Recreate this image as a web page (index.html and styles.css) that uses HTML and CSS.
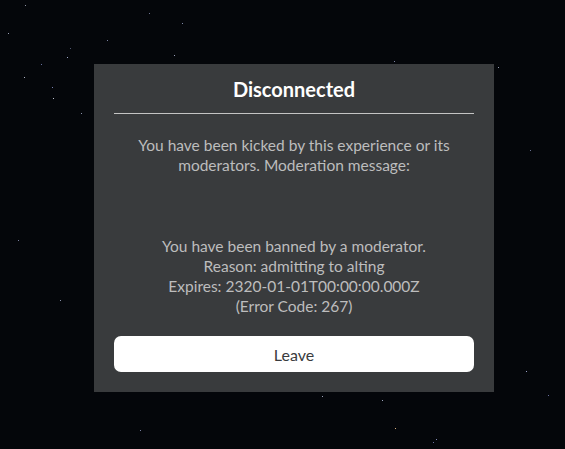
FILE: index.html
```html
<!DOCTYPE html>
<html lang="en">
<head>
    <meta charset="UTF-8">
    <meta name="viewport" content="width=device-width, initial-scale=1">
    <title>Disconnected</title>
    <link rel="stylesheet" href="styles.css">
</head>
<body>
    <!-- Starfield behind the prompt -->
    <svg class="stars" width="565" height="449" viewBox="0 0 565 449">
        <rect x="25" y="5" width="1" height="1" fill="#8a8fa0"/>
        <rect x="8" y="33" width="1" height="1" fill="#9aa0b5"/>
        <rect x="149" y="13" width="1" height="1" fill="#6d7390"/>
        <rect x="107" y="40" width="1" height="1" fill="#7a80a0"/>
        <rect x="182" y="23" width="1" height="1" fill="#8088a8"/>
        <rect x="174" y="55" width="1" height="1" fill="#9aa0b8"/>
        <rect x="67" y="57" width="1" height="1" fill="#a0a8c8"/>
        <rect x="41" y="64" width="1" height="1" fill="#6670a0"/>
        <rect x="24" y="77" width="1" height="1" fill="#b0b4c4"/>
        <rect x="52" y="87" width="1" height="1" fill="#7880b0"/>
        <rect x="53" y="98" width="1" height="1" fill="#c0c4d0"/>
        <rect x="81" y="113" width="1" height="1" fill="#8a90a8"/>
        <rect x="70" y="48" width="1" height="1" fill="#505670"/>
        <rect x="394" y="61" width="1" height="1" fill="#7a80a0"/>
        <rect x="498" y="67" width="1" height="1" fill="#9aa0b8"/>
        <rect x="530" y="150" width="1" height="1" fill="#6a7090"/>
        <rect x="18" y="240" width="1" height="1" fill="#7a80a0"/>
        <rect x="60" y="300" width="1" height="1" fill="#8a90a8"/>
        <rect x="526" y="371" width="1" height="1" fill="#9aa0c8"/>
        <rect x="548" y="395" width="1" height="1" fill="#6a70a0"/>
        <rect x="382" y="400" width="1" height="1" fill="#a0a8c0"/>
        <rect x="395" y="428" width="1" height="1" fill="#d8b080"/>
        <rect x="436" y="439" width="1" height="1" fill="#8088b0"/>
        <rect x="433" y="442" width="1" height="1" fill="#6a70a0"/>
        <rect x="322" y="396" width="1" height="1" fill="#9aa0b8"/>
        <rect x="140" y="430" width="1" height="1" fill="#7a80a0"/>
    </svg>

    <div class="prompt">
        <div class="prompt-title">Disconnected</div>
        <div class="prompt-body">
            <p>You have been kicked by this experience or its<br>moderators. Moderation message:</p>
            <p class="message">You have been banned by a moderator.<br>Reason: admitting to alting<br>Expires: 2320-01-01T00:00:00.000Z<br>(Error Code: 267)</p>
        </div>
        <button type="button" class="leave_button">Leave</button>
    </div>
</body>
</html>
```

FILE: styles.css
```css
body {
    font-family: "Source Sans Pro", Lato, "Noto Sans", sans-serif;
    background-color: #04060a; /* Near-black space */
    margin: 0;
    padding: 64px 0 0 94px;
    height: 449px;
    box-sizing: border-box;
    overflow: hidden;
}
.stars {
    position: absolute;
    left: 0;
    top: 0;
}
.prompt {
    position: relative;
    width: 400px;
    height: 328px;
    box-sizing: border-box;
    padding: 0 20px 20px;
    background-color: #393b3d;
    display: flex;
    flex-direction: column;
}
.prompt-title {
    height: 49px;
    line-height: 50px;
    border-bottom: 1px solid #c4c4c4;
    color: #fff;
    font-weight: bold;
    font-size: 20px;
    text-align: center;
}
.prompt-body {
    flex: 1;
    padding-top: 21px;
    color: #bdbdbd;
    font-size: 15.5px;
    line-height: 20.3px;
    text-align: center;
}
.prompt-body p {
    margin: 0;
}
.prompt-body .message {
    margin-top: 60px;
}
.leave_button {
    height: 36px;
    border: none;
    border-radius: 7px;
    background-color: #fff;
    color: #393b3d;
    font-family: inherit;
    font-size: 16px;
    cursor: pointer;
}
```
